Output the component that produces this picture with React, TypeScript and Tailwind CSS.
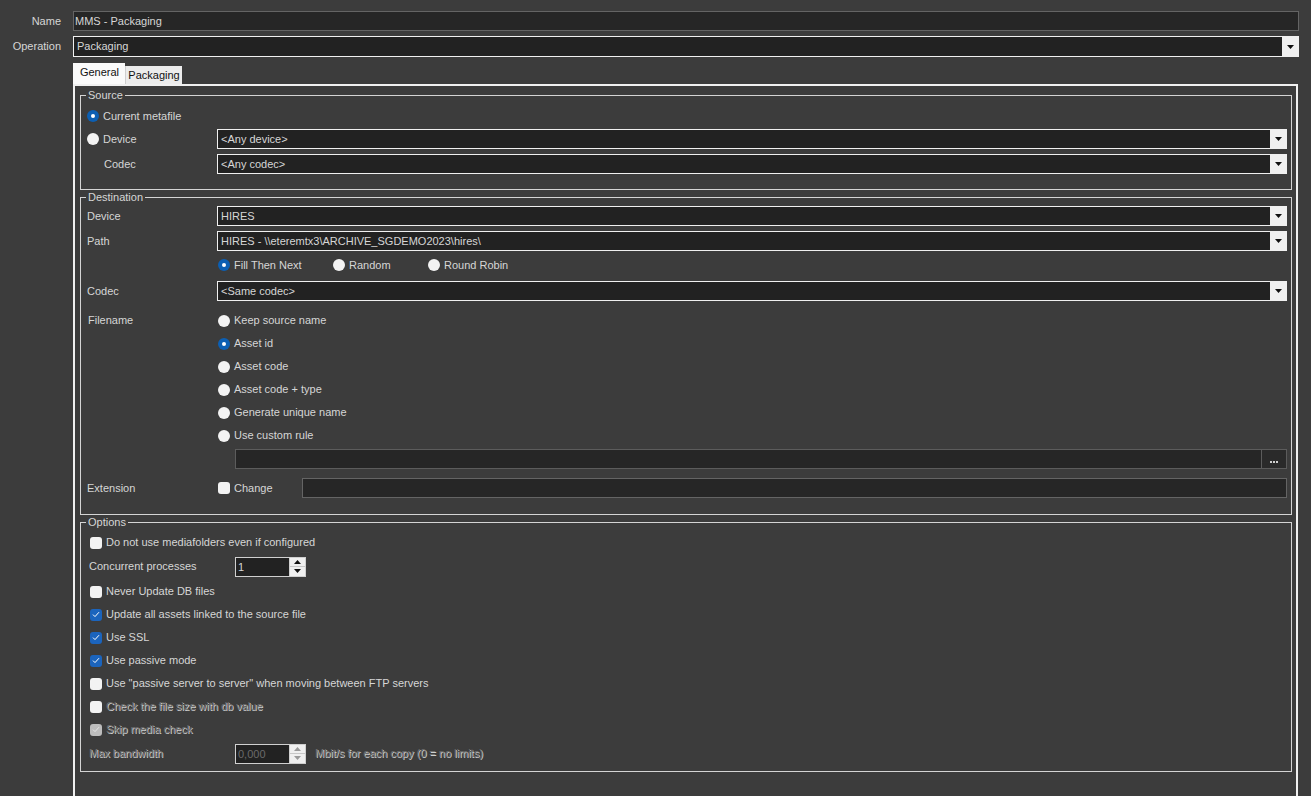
import { clsx as cn } from "clsx";

const text = "text-[#d6d6d6]";
const disabledText = "text-[#6e6e6e] [text-shadow:1px_1px_0_#cfcfcf]";

function Radio({ checked }: { checked?: boolean }) {
  if (checked) {
    return (
      <span className="w-[12px] h-[12px] rounded-full bg-[#0c5fb3] flex items-center justify-center shrink-0">
        <span className="w-[4px] h-[4px] rounded-full bg-white" />
      </span>
    );
  }
  return <span className="w-[12px] h-[12px] rounded-full bg-[#f3f3f3] shrink-0" />;
}

function Check({ checked, disabled }: { checked?: boolean; disabled?: boolean }) {
  if (checked) {
    return (
      <span
        className={cn(
          "w-[12px] h-[12px] rounded-[3px] flex items-center justify-center shrink-0",
          disabled ? "bg-[#bdbdbd]" : "bg-[#1b64bd]"
        )}
      >
        <svg width="8" height="7" viewBox="0 0 8 7">
          <path d="M1 3.6 L3 5.6 L7 1.2" fill="none" stroke={disabled ? "#e6e6e6" : "#ffffff"} strokeWidth="1" />
        </svg>
      </span>
    );
  }
  return <span className="w-[12px] h-[12px] rounded-[3px] bg-[#f3f3f3] shrink-0" />;
}

function Arrow() {
  return (
    <svg width="7" height="4" viewBox="0 0 7 4">
      <path d="M0 0 H7 L3.5 4 Z" fill="#111" />
    </svg>
  );
}

function Select({ value, className }: { value: string; className?: string }) {
  return (
    <div className={cn("flex h-[20px] border border-[#f0f0f0] bg-[#222222]", className)}>
      <div className={cn("flex-1 px-[3px] leading-[18px] whitespace-nowrap", text)}>{value}</div>
      <div className="w-[16px] bg-[#f0f0f0] flex items-center justify-center">
        <Arrow />
      </div>
    </div>
  );
}

function Spinner({ value, disabled }: { value: string; disabled?: boolean }) {
  return (
    <div className="flex h-[20px] w-[71px] border border-[#d0d0d0] bg-[#222222]">
      <div className={cn("flex-1 px-[2px] leading-[18px]", disabled ? "text-[#6a6a6a]" : text)}>{value}</div>
      <div className="w-[16px] flex flex-col bg-[#f0f0f0] border-l border-[#d0d0d0]">
        <div className="flex-1 flex items-center justify-center border-b border-[#c8c8c8]">
          <svg width="7" height="4" viewBox="0 0 7 4">
            <path d="M0 4 H7 L3.5 0 Z" fill={disabled ? "#9a9a9a" : "#111"} />
          </svg>
        </div>
        <div className="flex-1 flex items-center justify-center">
          <svg width="7" height="4" viewBox="0 0 7 4">
            <path d="M0 0 H7 L3.5 4 Z" fill={disabled ? "#9a9a9a" : "#111"} />
          </svg>
        </div>
      </div>
    </div>
  );
}

function Group({ title, className, children }: { title: string; className?: string; children: React.ReactNode }) {
  return (
    <div className={cn("border border-[#d4d4d4]", className)}>
      <div className={cn("-mt-[7px] ml-[5px] px-[2px] w-fit bg-[#3c3c3c] leading-[13px]", text)}>{title}</div>
      {children}
    </div>
  );
}

function OptionRow({
  label,
  checked,
  disabled,
}: {
  label: string;
  checked?: boolean;
  disabled?: boolean;
}) {
  return (
    <div className="flex items-center h-[23px] ml-[1px] gap-[4px]">
      <Check checked={checked} disabled={disabled} />
      <span className={disabled ? disabledText : text}>{label}</span>
    </div>
  );
}

const filenameOptions = [
  { label: "Keep source name" },
  { label: "Asset id", checked: true },
  { label: "Asset code" },
  { label: "Asset code + type" },
  { label: "Generate unique name" },
  { label: "Use custom rule" },
];

export default function App() {
  return (
    <div
      className={cn(
        "w-[1311px] h-[796px] bg-[#3c3c3c] overflow-hidden text-[11px] font-['Liberation_Sans',Arial,sans-serif]",
        text
      )}
    >
      {/* header fields */}
      <div className="flex items-center pt-[11px]">
        <div className="w-[61px] text-right">Name</div>
        <div className="ml-[12px] w-[1226px] h-[20px] border border-[#646464] bg-[#262626] px-[1px] leading-[18px]">
          MMS - Packaging
        </div>
      </div>
      <div className="flex items-center mt-[5px]">
        <div className="w-[61px] text-right">Operation</div>
        <Select value="Packaging" className="ml-[12px] w-[1226px] h-[21px]" />
      </div>

      {/* tabs */}
      <div className="flex items-end ml-[73px] mt-[6px]">
        <div className="h-[21px] w-[52px] bg-[#fafafa] text-[#111] flex items-center justify-center pb-[2px] pl-[1px]">
          General
        </div>
        <div className="h-[18px] w-[57px] bg-[#ececec] text-[#111] flex items-center justify-center border-l border-[#cfcfcf]">
          Packaging
        </div>
      </div>

      {/* tab panel */}
      <div className="ml-[73px] w-[1225px] h-[720px] border-2 border-b-0 border-[#f0f0f0] pl-[5px] pr-[4px] pt-[9px]">
        <Group title="Source">
          <div className="pl-[6px] pr-[4px] pb-[15px]">
            <div className="flex items-center h-[20px] mt-[4px] gap-[4px]">
              <Radio checked />
              <span>Current metafile</span>
            </div>
            <div className="flex items-center mt-[3px]">
              <div className="w-[130px] flex items-center gap-[4px]">
                <Radio />
                <span>Device</span>
              </div>
              <Select value="<Any device>" className="flex-1" />
            </div>
            <div className="flex items-center mt-[5px]">
              <div className="w-[130px] pl-[17px]">Codec</div>
              <Select value="<Any codec>" className="flex-1" />
            </div>
          </div>
        </Group>

        <Group title="Destination" className="mt-[7px]">
          <div className="pl-[6px] pr-[4px] pb-[16px]">
            <div className="flex items-center mt-[2px]">
              <div className="w-[130px]">Device</div>
              <Select value="HIRES" className="flex-1" />
            </div>
            <div className="flex items-center mt-[5px]">
              <div className="w-[130px]">Path</div>
              <Select value="HIRES - \\eteremtx3\ARCHIVE_SGDEMO2023\hires\" className="flex-1" />
            </div>
            <div className="flex items-center h-[20px] mt-[4px] pl-[131px]">
              <div className="w-[115px] flex items-center gap-[4px]">
                <Radio checked />
                <span>Fill Then Next</span>
              </div>
              <div className="w-[95px] flex items-center gap-[4px]">
                <Radio />
                <span>Random</span>
              </div>
              <div className="flex items-center gap-[4px]">
                <Radio />
                <span>Round Robin</span>
              </div>
            </div>
            <div className="flex items-center mt-[6px]">
              <div className="w-[130px]">Codec</div>
              <Select value="<Same codec>" className="flex-1" />
            </div>
            <div className="flex mt-[8px]">
              <div className="w-[130px] pl-[1px] h-[23px] leading-[23px]">Filename</div>
              <div className="flex-1">
                {filenameOptions.map((o) => (
                  <div key={o.label} className="flex items-center h-[23px] ml-[1px] gap-[4px]">
                    <Radio checked={o.checked} />
                    <span>{o.label}</span>
                  </div>
                ))}
                <div className="flex ml-[18px] mt-[2px] h-[20px]">
                  <div className="flex-1 border border-[#5c5c5c] bg-[#262626]" />
                  <div className="w-[26px] -ml-px border border-[#5c5c5c] bg-[#2a2a2a] flex items-end justify-center pb-[5px] gap-[1px]">
                    <span className="w-[2px] h-[2px] bg-[#cfcfcf]" />
                    <span className="w-[2px] h-[2px] bg-[#cfcfcf]" />
                    <span className="w-[2px] h-[2px] bg-[#cfcfcf]" />
                  </div>
                </div>
              </div>
            </div>
            <div className="flex items-center mt-[9px]">
              <div className="w-[130px]">Extension</div>
              <div className="w-[85px] ml-[1px] flex items-center gap-[4px]">
                <Check />
                <span>Change</span>
              </div>
              <div className="flex-1 -ml-px h-[20px] border border-[#646464] bg-[#262626]" />
            </div>
          </div>
        </Group>

        <Group title="Options" className="mt-[7px]">
          <div className="pl-[8px] pr-[4px] pb-[5px] pt-[2px]">
            <OptionRow label="Do not use mediafolders even if configured" />
            <div className="flex items-center h-[26px] pb-[1px]">
              <div className="w-[146px]">Concurrent processes</div>
              <Spinner value="1" />
            </div>
            <OptionRow label="Never Update DB files" />
            <OptionRow label="Update all assets linked to the source file" checked />
            <OptionRow label="Use SSL" checked />
            <OptionRow label="Use passive mode" checked />
            <OptionRow label={'Use "passive server to server" when moving between FTP servers'} />
            <OptionRow label="Check the file size with db value" disabled />
            <OptionRow label="Skip media check" checked disabled />
            <div className="flex items-center h-[25px]">
              <div className={cn("w-[146px]", disabledText)}>Max bandwidth</div>
              <Spinner value="0,000" disabled />
              <span className={cn("ml-[9px]", disabledText)}>Mbit/s for each copy (0 = no limits)</span>
            </div>
          </div>
        </Group>
      </div>
    </div>
  );
}
